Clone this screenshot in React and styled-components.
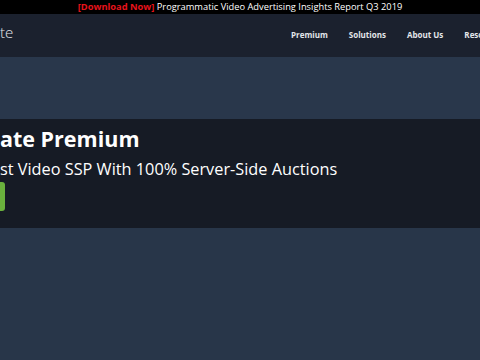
import React from "react";
import styled, { createGlobalStyle } from "styled-components";

const GlobalStyle = createGlobalStyle`
  body {
    margin: 0;
    background: #283649;
    font-family: "Open Sans", "Liberation Sans", sans-serif;
    overflow: hidden;
  }
`;

const Page = styled.div`
  width: 480px;
  height: 360px;
  background: #283649;
  overflow: hidden;
`;

const Announcement = styled.div`
  height: 14px;
  background: #000;
  color: #fff;
  font-size: 9.3px;
  line-height: 14px;
  text-align: center;
  white-space: nowrap;
`;

const Highlight = styled.span`
  color: #e8131b;
  font-weight: 700;
`;

const NavBar = styled.header`
  height: 43px;
  background: #1b212e;
  display: flex;
  align-items: center;
  justify-content: space-between;
  overflow: hidden;
`;

const Logo = styled.div`
  color: #e6e8ec;
  font-size: 15px;
  font-weight: 300;
  margin-top: -8px;
`;

const Menu = styled.nav`
  display: flex;
  gap: 21px;
  margin-right: -25px;
  margin-top: -3px;
`;

const MenuItem = styled.a`
  color: #e4e6ea;
  font-size: 8px;
  font-weight: 700;
  white-space: nowrap;
  text-decoration: none;
`;

const Band = styled.div`
  height: 62px;
  background: #29374b;
`;

const Hero = styled.section`
  height: 109px;
  background: #161b25;
  display: flex;
  flex-direction: column;
  overflow: hidden;
  color: #fff;
`;

const Title = styled.h1`
  margin: 5px 0 0;
  font-size: 21.5px;
  font-weight: 700;
  line-height: 30px;
  white-space: nowrap;
`;

const Subtitle = styled.p`
  margin: 3px 0 0;
  font-size: 16.3px;
  line-height: 24px;
  white-space: nowrap;
`;

const CtaButton = styled.div`
  width: 5px;
  height: 29px;
  margin-top: 1px;
  background: #6ab13d;
  border-radius: 0 3px 3px 0;
`;

export default function App() {
  return (
    <>
      <GlobalStyle />
      <Page>
        <Announcement>
          <Highlight>[Download Now]</Highlight> Programmatic Video Advertising
          Insights Report Q3 2019
        </Announcement>
        <NavBar>
          <Logo>te</Logo>
          <Menu>
            <MenuItem>Premium</MenuItem>
            <MenuItem>Solutions</MenuItem>
            <MenuItem>About Us</MenuItem>
            <MenuItem>Resources</MenuItem>
          </Menu>
        </NavBar>
        <Band />
        <Hero>
          <Title>ate Premium</Title>
          <Subtitle>st Video SSP With 100% Server-Side Auctions</Subtitle>
          <CtaButton />
        </Hero>
      </Page>
    </>
  );
}
